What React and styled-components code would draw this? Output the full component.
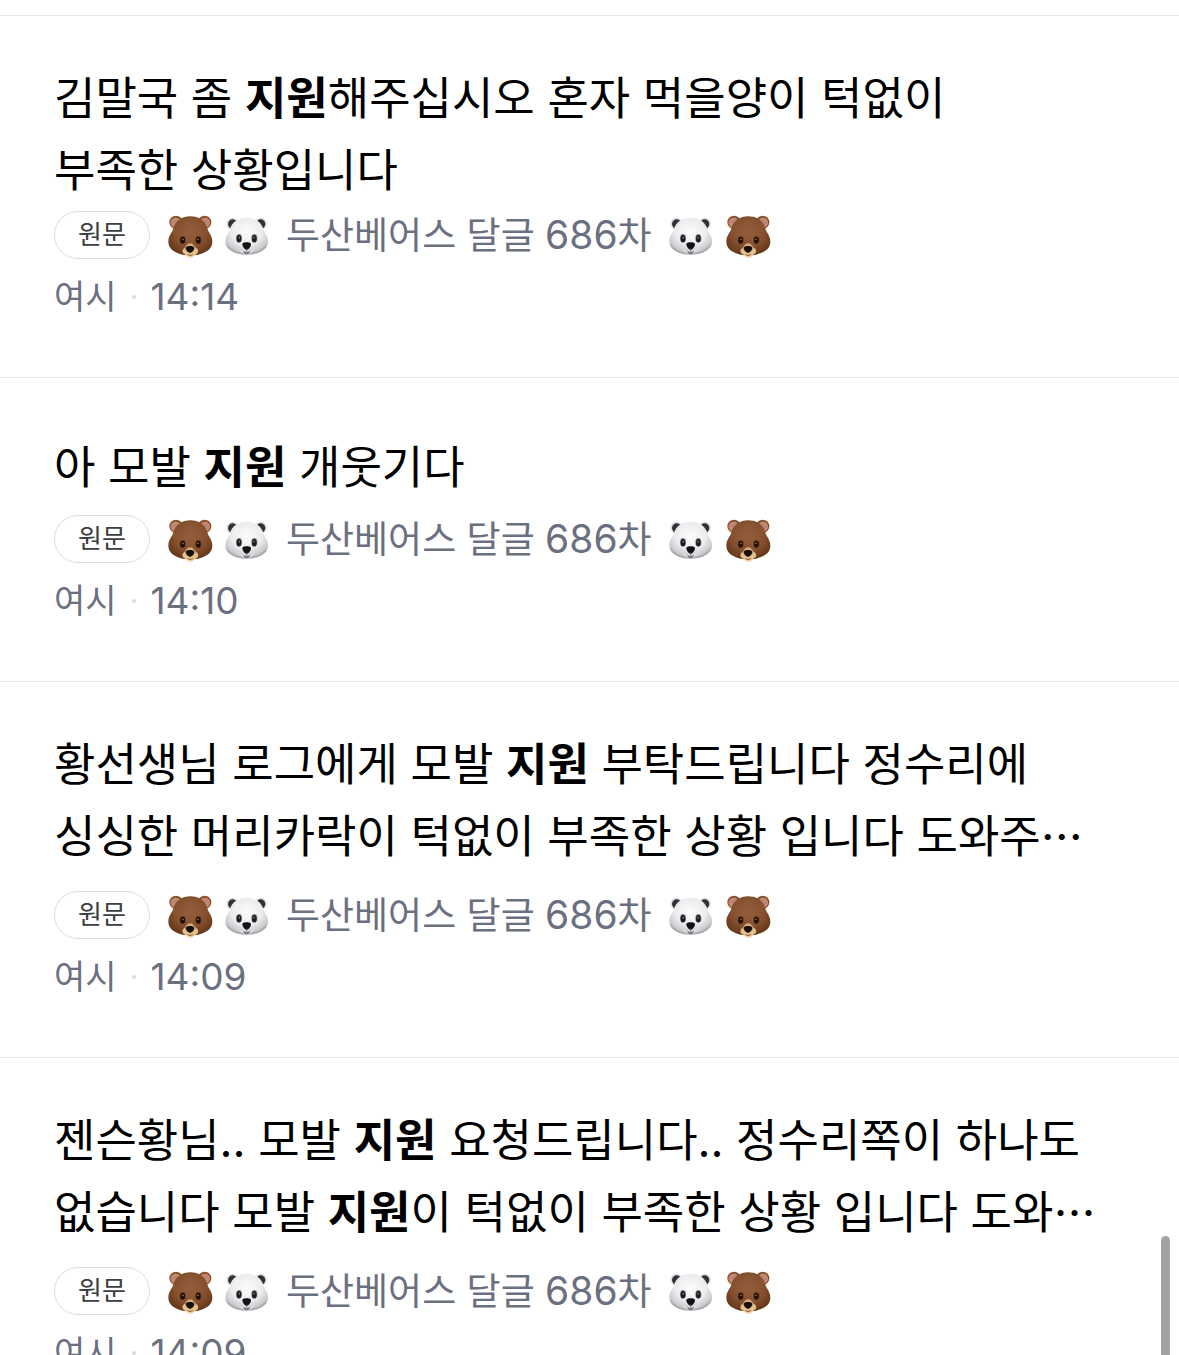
import React from 'react'
import styled, { createGlobalStyle } from 'styled-components'

const GlobalStyle = createGlobalStyle`
  * {
    box-sizing: border-box;
  }

  body {
    margin: 0;
    background: #fff;
    color: #000;
    font-family: Inter, "Noto Sans CJK KR", sans-serif;
  }
`

const Page = styled.main`
  position: relative;
  height: 100vh;
  padding-top: 15px;
  overflow: hidden;
`

const List = styled.ul`
  margin: 0;
  padding: 0;
  list-style: none;
`

const Item = styled.li`
  padding: ${props => (props.$single ? 54 : 47)}px 54px 56px;
  border-top: 1px solid #e6e6e8;
`

const Title = styled.a`
  display: block;
  margin-bottom: ${props => props.$gap}px;
  color: #000;
  font-size: 45px;
  line-height: 72px;
  text-decoration: none;
`

const Line = styled.span`
  display: block;
  white-space: nowrap;
`

const Mark = styled.b`
  font-weight: 700;
`

const Dots = styled.span`
  font-family: "Noto Sans CJK KR", sans-serif;
  font-size: 42px;
  font-weight: 500;
  line-height: 1;
`

const Origin = styled.a`
  display: flex;
  align-items: center;
  height: 48px;
  color: #6b7080;
  font-size: 37px;
  line-height: 48px;
  white-space: nowrap;
  text-decoration: none;
`

const Badge = styled.span`
  flex: none;
  width: 96px;
  height: 48px;
  margin-right: 17px;
  border: 1px solid #dedee2;
  border-radius: 24px;
  color: #3c3e45;
  font-size: 26px;
  line-height: 46px;
  text-align: center;
`

const Faces = styled.span`
  display: flex;
  gap: 11px;
`

const Source = styled.span`
  margin: 0 16px;
  padding-top: 2px;
`

const Count = styled.span`
  font-size: 39px;
  line-height: 1;
`

const Info = styled.div`
  display: flex;
  align-items: center;
  height: 48px;
  margin-top: 14px;
  color: #6b7080;
  line-height: 48px;
`

const Cafe = styled.span`
  font-size: 34px;
`

const Time = styled.time`
  font-size: 37px;
`

const Dot = styled.span`
  width: 4px;
  height: 4px;
  margin: 0 15px;
  border-radius: 2px;
  background: #d8d9de;
`

const ScrollThumb = styled.div`
  position: absolute;
  right: 9px;
  bottom: 0;
  width: 9px;
  height: 119px;
  border-radius: 5px 5px 0 0;
  background: #a3a3a3;
`

const Face = styled.svg`
  display: block;
  width: 46px;
  height: 46px;
`

const Defs = styled.svg`
  position: absolute;
  width: 0;
  height: 0;
`

const FaceColors = () => (
  <Defs aria-hidden="true">
    <defs>
      <radialGradient id="brown" cx="0.5" cy="0.4" r="0.62">
        <stop offset="0" stopColor="#94603c" />
        <stop offset="0.6" stopColor="#85502e" />
        <stop offset="1" stopColor="#633619" />
      </radialGradient>
      <radialGradient id="white" cx="0.5" cy="0.38" r="0.65">
        <stop offset="0" stopColor="#fcfcfd" />
        <stop offset="0.55" stopColor="#ececee" />
        <stop offset="0.85" stopColor="#c9cacd" />
        <stop offset="1" stopColor="#8b8c90" />
      </radialGradient>
      <radialGradient id="ear">
        <stop offset="0" stopColor="#b98370" />
        <stop offset="1" stopColor="#c18b73" />
      </radialGradient>
      <linearGradient id="muzzle" x1="0" y1="0" x2="0" y2="1">
        <stop offset="0" stopColor="#d6a873" />
        <stop offset="1" stopColor="#f0d09c" />
      </linearGradient>
    </defs>
  </Defs>
)

const Bear = () => (
  <Face viewBox="21 21 138 138" role="img" aria-label="곰">
    <circle cx="48" cy="52" r="20" fill="#89512f" />
    <circle cx="134" cy="52" r="20" fill="#89512f" />
    <circle cx="47" cy="53" r="15" fill="url(#ear)" />
    <circle cx="135" cy="53" r="15" fill="url(#ear)" />
    <path
      d="M91 34C66 34 46 48 40 70C37 84 25 91 25 110C25 132 46 144 68 149C82 152 100 152 114 149C136 144 157 132 157 110C157 91 145 84 142 70C136 48 116 34 91 34Z"
      fill="url(#brown)"
    />
    <path
      d="M90 115C81 115 79 124 73 129C64 135 66 146 77 149C81 155 85 158 91 158C97 158 101 155 105 149C116 146 118 135 109 129C102 124 100 115 90 115Z"
      fill="url(#muzzle)"
    />
    <path d="M81 146Q91 152 101 146Q98 153 91 153Q84 153 81 146Z" fill="#8f6542" />
    <path d="M77 128C77 121 103 121 103 128C103 135 96 143 90 143C84 143 77 135 77 128Z" fill="#15110f" />
    <ellipse cx="68" cy="105" rx="9" ry="12" fill="#65381d" />
    <ellipse cx="115" cy="105" rx="9" ry="12" fill="#65381d" />
    <ellipse cx="68" cy="106" rx="7" ry="10" fill="#21130b" />
    <ellipse cx="115" cy="106" rx="7" ry="10" fill="#21130b" />
    <circle cx="69" cy="103" r="2" fill="#c9a98e" />
    <circle cx="114" cy="103" r="2" fill="#c9a98e" />
  </Face>
)

const PolarBear = () => (
  <Face viewBox="192 21 138 138" role="img" aria-label="흰곰">
    <circle cx="217" cy="56" r="18" fill="#dfe0e3" />
    <circle cx="303" cy="56" r="18" fill="#dfe0e3" />
    <circle cx="218" cy="57" r="14" fill="#303237" />
    <circle cx="302" cy="57" r="14" fill="#303237" />
    <path
      d="M260 38C236 38 216 50 210 72C207 84 196 91 196 109C196 130 215 142 237 147C252 150 268 150 283 147C305 142 324 130 324 109C324 91 313 84 310 72C304 50 284 38 260 38Z"
      fill="url(#white)"
    />
    <path d="M236 130Q247 139 260 135Q273 139 284 130Q280 146 260 147Q240 146 236 130Z" fill="#dcdddf" />
    <path d="M249 138Q260 145 271 138Q268 147 260 147Q252 147 249 138Z" fill="#6d6e72" />
    <path d="M247 117C247 110 273 110 273 117C273 125 266 134 260 134C254 134 247 125 247 117Z" fill="#111214" />
    <path d="M260 130V140" stroke="#4a4b50" strokeWidth="2" />
    <ellipse cx="237" cy="100" rx="9" ry="13" fill="#85868a" />
    <ellipse cx="283" cy="100" rx="9" ry="13" fill="#85868a" />
    <ellipse cx="237" cy="101" rx="7" ry="11" fill="#1d1e21" />
    <ellipse cx="283" cy="101" rx="7" ry="11" fill="#1d1e21" />
    <circle cx="238" cy="98" r="2" fill="#b9babd" />
    <circle cx="282" cy="98" r="2" fill="#b9babd" />
  </Face>
)

const comments = [
  {
    time: '14:14',
    gap: 4,
    lines: [
      <>김말국 좀 <Mark>지원</Mark>해주십시오 혼자 먹을양이 턱없이</>,
      <>부족한 상황입니다</>,
    ],
  },
  {
    time: '14:10',
    gap: 11,
    lines: [<>아 모발 <Mark>지원</Mark> 개웃기다</>],
  },
  {
    time: '14:09',
    gap: 18,
    lines: [
      <>황선생님 로그에게 모발 <Mark>지원</Mark> 부탁드립니다 정수리에</>,
      <>싱싱한 머리카락이 턱없이 부족한 상황 입니다 도와주<Dots>⋯</Dots></>,
    ],
  },
  {
    time: '14:09',
    gap: 18,
    lines: [
      <>젠슨황님.. 모발 <Mark>지원</Mark> 요청드립니다.. 정수리쪽이 하나도</>,
      <>없습니다 모발 <Mark>지원</Mark>이 턱없이 부족한 상황 입니다 도와<Dots>⋯</Dots></>,
    ],
  },
]

const Comment = ({ lines, gap, time }) => (
  <Item $single={lines.length === 1}>
    <Title href="#comment" $gap={gap}>
      {lines.map((line, i) => <Line key={i}>{line}</Line>)}
    </Title>
    <Origin href="#origin">
      <Badge>원문</Badge>
      <Faces>
        <Bear />
        <PolarBear />
      </Faces>
      <Source>두산베어스 달글 <Count>686</Count>차</Source>
      <Faces>
        <PolarBear />
        <Bear />
      </Faces>
    </Origin>
    <Info>
      <Cafe>여시</Cafe>
      <Dot />
      <Time>{time}</Time>
    </Info>
  </Item>
)

export default function App () {
  return (
    <Page>
      <GlobalStyle />
      <FaceColors />
      <List>
        {comments.map((comment, i) => <Comment key={i} {...comment} />)}
      </List>
      <ScrollThumb />
    </Page>
  )
}
